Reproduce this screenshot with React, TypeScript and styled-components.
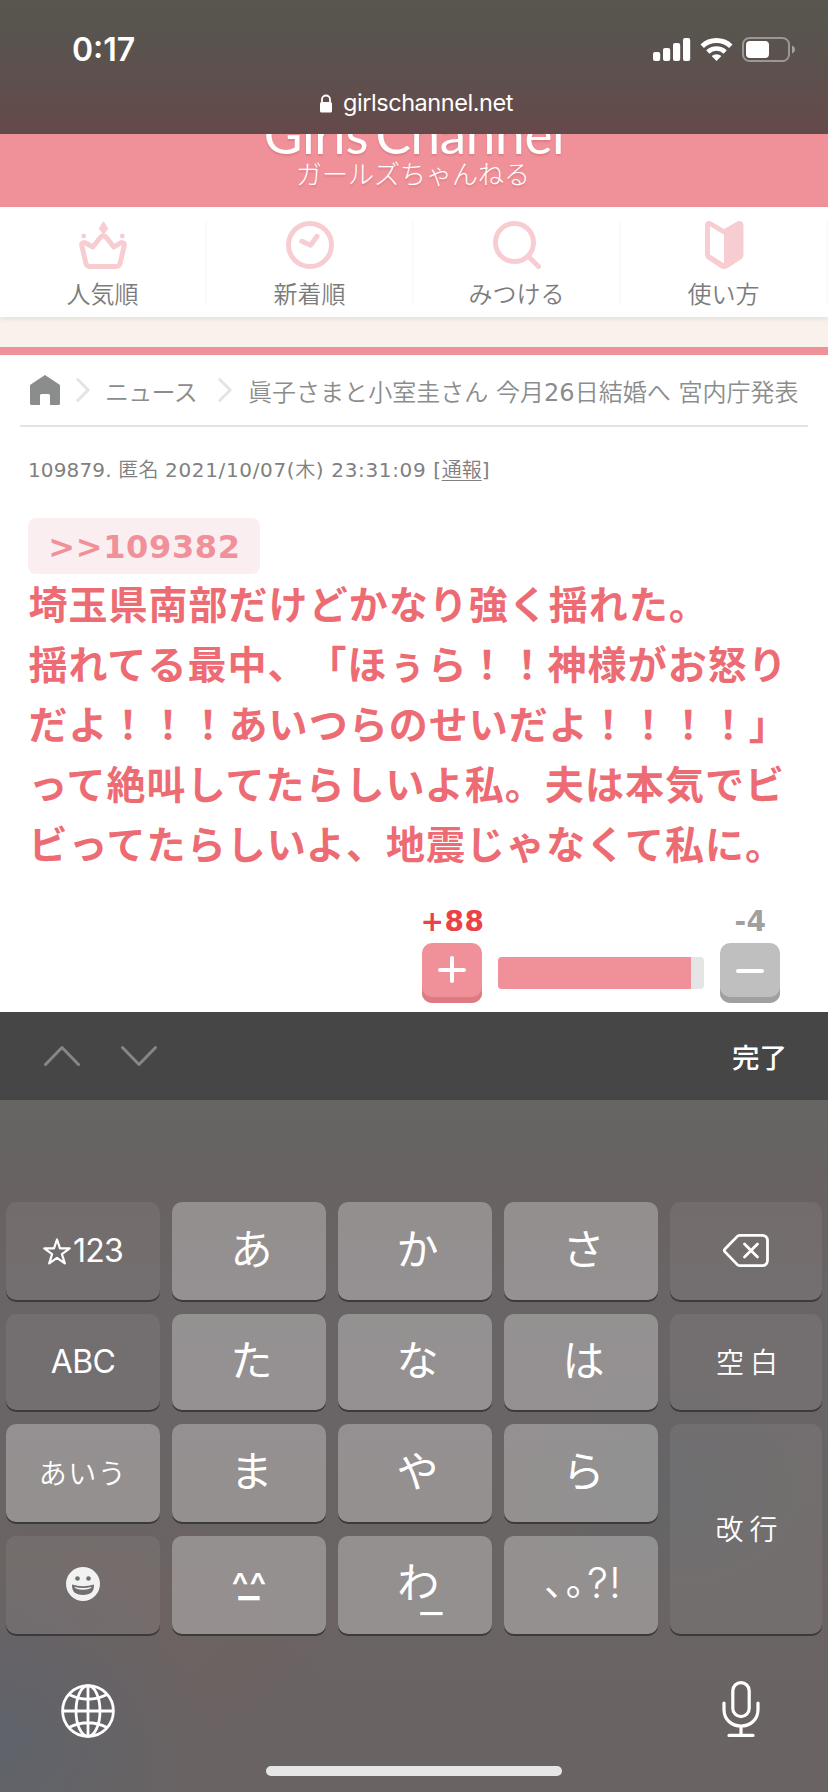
import React from "react";
import styled, { createGlobalStyle } from "styled-components";

const jp = `"Noto Sans CJK JP", sans-serif`;
const ui = `Inter, "Noto Sans CJK JP", sans-serif`;
const web = `"DejaVu Sans", "Noto Sans CJK JP", sans-serif`;

const GlobalStyle = createGlobalStyle`
  * { box-sizing: border-box; }
  body { margin: 0; background: #fff; }
  svg { display: block; flex: none; }
`;

const Screen = styled.div`
  width: 828px;
  height: 1792px;
  display: flex;
  flex-direction: column;
  overflow: hidden;
  background: #fff;
  font-family: ${web};
`;

/* ---------- Browser chrome ---------- */

const BrowserBar = styled.header`
  height: 134px;
  flex: none;
  color: #fff;
  font-family: ${ui};
  background: linear-gradient(180deg, #58564f 0%, #59534e 33%, #5e4f4d 62%, #654a4a 95%, #62494a 100%);
`;

const StatusRow = styled.div`
  height: 84px;
  display: flex;
  justify-content: space-between;
  align-items: flex-start;
  padding: 32px 32px 0 72px;
`;

const Clock = styled.span`
  font-size: 32px;
  line-height: 36px;
  font-weight: 600;
`;

const StatusIcons = styled.div`
  display: flex;
  gap: 9px;
  padding-top: 5px;
`;

const AddressRow = styled.div`
  display: flex;
  align-items: center;
  gap: 11px;
  height: 38px;
  padding-left: 320px;
  font-size: 23.5px;
  line-height: 30px;
  letter-spacing: -0.45px;
`;

/* ---------- Site ---------- */

const SiteHeader = styled.div`
  height: 73px;
  flex: none;
  overflow: hidden;
  background: #f09199;
  color: #fff;
  display: flex;
  flex-direction: column;
  align-items: center;
  text-shadow: 0 2px 2px rgba(160, 60, 70, 0.22);
`;

const Logo = styled.div`
  font-family: Lato, sans-serif;
  font-size: 53px;
  line-height: 60px;
  height: 60px;
  margin-top: -30px;
  font-weight: 400;
  letter-spacing: -0.3px;
  word-spacing: -6px;
  white-space: nowrap;
  flex: none;
`;

const LogoKana = styled.div`
  font-family: ${jp};
  font-weight: 300;
  font-size: 26px;
  line-height: 30px;
  margin: -6px 2px 0 0;
  white-space: nowrap;
`;

const SiteNav = styled.nav`
  position: relative;
  height: 110px;
  flex: none;
  display: grid;
  grid-template-columns: repeat(4, 207px);
  padding-top: 14px;
  background: #fff;
  box-shadow: 0 2px 5px rgba(80, 90, 80, 0.13);
`;

const NavItem = styled.a`
  height: 84px;
  border-right: 2px solid #fafafa;
  display: flex;
  flex-direction: column;
  align-items: center;
  gap: 8px;
  font-family: ${jp};
  font-weight: 350;
  font-size: 24px;
  line-height: 32px;
  color: #7c7c7c;
`;

const Band = styled.div`
  height: 38px;
  flex: none;
  background: #f9f2ec;
  border-bottom: 8px solid #f09199;
`;

const Breadcrumb = styled.div`
  height: 72px;
  flex: none;
  margin: 0 20px;
  padding: 0 0 0 10px;
  border-bottom: 2px solid #e2e4e3;
  display: flex;
  align-items: center;
  font-weight: 350;
  font-size: 24px;
  line-height: 66px;
  color: #8b8d8c;
  white-space: nowrap;
`;

const Crumb = styled.span<{ $left: number; $spacing?: number }>`
  margin-left: ${(p) => p.$left}px;
  padding-top: 5px;
  letter-spacing: ${(p) => p.$spacing ?? 0}px;
`;

const CrumbArrow = styled.svg<{ $left: number }>`
  margin-left: ${(p) => p.$left}px;
`;

const Latin = styled.span`
  font-weight: 400;
`;

const Comment = styled.article`
  height: 585px;
  flex: none;
  padding: 28px 28px 0;
`;

const Meta = styled.div`
  font-weight: 350;
  font-size: 20px;
  line-height: 30px;
  letter-spacing: 0.15px;
  color: #808080;
  white-space: nowrap;
`;

const PostedAt = styled.span`
  letter-spacing: 0.64px;
`;

const Report = styled.span`
  letter-spacing: 0;
  text-decoration: underline;
  text-decoration-thickness: 1px;
  text-underline-offset: 3px;
`;

const ReplyTo = styled.div`
  width: 232px;
  height: 56px;
  margin-top: 33px;
  border-radius: 8px;
  background: #fbeef1;
  color: #f09199;
  font-weight: 700;
  font-size: 32px;
  line-height: 58px;
  letter-spacing: 0.65px;
  padding-left: 1px;
  text-align: center;
`;

const Body = styled.div`
  margin-top: -2px;
  padding-left: 0.5px;
  font-family: ${jp};
  font-weight: 700;
  font-size: 39px;
  line-height: 60px;
  letter-spacing: 1.02px;
  color: #ed6c74;
  white-space: nowrap;
  text-spacing-trim: space-all;
`;

const Votes = styled.div`
  display: flex;
  margin: 32px 20px 0 394px;
  align-items: flex-end;
  justify-content: space-between;
`;

const Vote = styled.div`
  width: 60px;
  display: flex;
  flex-direction: column;
  align-items: center;
`;

const Count = styled.span<{ $color: string }>`
  font-weight: 700;
  font-size: 28px;
  line-height: 36px;
  height: 39px;
  letter-spacing: 0.5px;
  padding-left: 1px;
  color: ${(p) => p.$color};
`;

const VoteButton = styled.button<{ $face: string; $edge: string }>`
  width: 60px;
  height: 60px;
  padding: 0 0 6px;
  border: 0;
  border-radius: 10px;
  background: ${(p) => p.$face};
  box-shadow: inset 0 -6px 0 ${(p) => p.$edge};
  display: flex;
  align-items: center;
  justify-content: center;
`;

const Meter = styled.div`
  width: 206px;
  height: 32px;
  margin-bottom: 14px;
  border-radius: 4px;
  overflow: hidden;
  background: #e5e5e5;
`;

const MeterFill = styled.div`
  height: 100%;
  background: #f09199;
`;

/* ---------- Keyboard ---------- */

const Accessory = styled.div`
  height: 88px;
  flex: none;
  display: flex;
  align-items: center;
  padding: 0 41px 0 44px;
  gap: 41px;
  background: #464646;
`;

const Done = styled.span`
  margin-left: auto;
  color: #fff;
  font-family: ${jp};
  font-weight: 500;
  font-size: 27.5px;
  line-height: 40px;
`;

const Keyboard = styled.div`
  flex: 1;
  display: flex;
  flex-direction: column;
  padding-top: 102px;
  color: #fff;
  background:
    radial-gradient(ellipse 200px 190px at 0px 640px, #5f636a 0%, rgba(97, 99, 105, 0.7) 45%, rgba(106, 100, 100, 0) 100%),
    radial-gradient(ellipse 260px 150px at 90px 520px, rgba(110, 98, 97, 0.8), rgba(106, 100, 100, 0) 100%),
    radial-gradient(ellipse 150px 120px at 680px 390px, rgba(99, 101, 103, 0.8), rgba(106, 100, 100, 0) 100%),
    linear-gradient(180deg, #666562 0px, #666463 40px, #696262 100px, #696566 200px, #6a6464 480px, #6a6363 692px);
`;

const KeyGrid = styled.div`
  display: grid;
  grid-template-columns: repeat(4, 154px) 152px;
  grid-template-rows: 98px 96px 98px 98px;
  gap: 14px 12px;
  padding-left: 6px;
`;

const Key = styled.div<{ $tone: "light" | "dark"; $tall?: boolean }>`
  ${(p) => (p.$tall ? "grid-row: span 2;" : "")}
  display: flex;
  align-items: center;
  justify-content: center;
  border-radius: 10px;
  background: rgba(255, 255, 255, ${(p) => (p.$tone === "light" ? 0.285 : 0.065)});
  box-shadow: 0 2px 0 #3d3a3a;
`;

const Kana = styled.span`
  font-family: ${jp};
  font-weight: 400;
  font-size: 42px;
  line-height: 60px;
  padding: 0 0 9px 5px;
`;

const KeyLabel = styled.span<{ $spacing: number; $indent: number }>`
  font-family: ${jp};
  font-weight: 350;
  font-size: 28px;
  line-height: 40px;
  letter-spacing: ${(p) => p.$spacing}px;
  padding: 0 0 3px ${(p) => p.$indent}px;
`;

const LatinLabel = styled.span`
  display: flex;
  align-items: center;
  gap: 2px;
  font-family: ${ui};
  font-size: 32px;
  line-height: 40px;
  letter-spacing: -0.7px;
`;

const Kaomoji = styled.span`
  display: flex;
  flex-direction: column;
  align-items: center;
  font-family: ${ui};
  padding-bottom: 4px;
`;

const KaomojiEyes = styled.span`
  font-weight: 500;
  font-size: 37px;
  line-height: 30px;
  height: 24px;
`;

const KaomojiMouth = styled.span`
  font-weight: 500;
  font-size: 46px;
  line-height: 10px;
  height: 22px;
  margin-top: -21px;
`;

const WaLabel = styled.span`
  display: flex;
  font-family: ${jp};
  font-size: 42px;
  line-height: 60px;
  padding-bottom: 10px;
`;

const WaBar = styled.span`
  font-family: ${ui};
  font-weight: 300;
  font-size: 50px;
  margin: 14px -10px -14px -19px;
`;

const Punctuation = styled.span`
  display: flex;
  align-items: center;
  font-family: ${jp};
  font-size: 38px;
  line-height: 60px;
  letter-spacing: 2px;
  padding: 0 0 13px 5px;
`;

const Marks = styled.span`
  font-family: ${ui};
  font-weight: 300;
  font-size: 42px;
  line-height: 50px;
  letter-spacing: 1px;
  padding-top: 8px;
`;

const SystemRow = styled.div`
  display: flex;
  justify-content: space-between;
  align-items: flex-start;
  height: 132px;
  padding: 46px 68px 0 60px;
`;

const HomeIndicator = styled.div`
  width: 296px;
  height: 10px;
  margin: 0 auto;
  border-radius: 5px;
  background: #e6e6e6;
`;

/* ---------- Icons ---------- */

const Signal = () => (
  <svg width="38" height="24" viewBox="0 0 38 24" fill="#fff">
    <rect x="0" y="15" width="7.2" height="9" rx="2" />
    <rect x="10" y="11" width="7.2" height="13" rx="2" />
    <rect x="20" y="6" width="7.2" height="18" rx="2" />
    <rect x="30" y="1" width="7.2" height="23" rx="2" />
  </svg>
);

const Wifi = () => (
  <svg width="33" height="24" viewBox="0 0 33 24" fill="none" stroke="#fff">
    <path d="M2.2 9.2A20.8 20.8 0 0 1 30.8 9.2" strokeWidth="5" />
    <path d="M7.8 15A12.6 12.6 0 0 1 25.2 15" strokeWidth="4.6" />
    <path d="M11.6 19.1a7.2 7.2 0 0 1 9.8 0L16.5 24z" fill="#fff" stroke="none" />
  </svg>
);

const Battery = () => (
  <svg width="54" height="26" viewBox="0 0 54 26">
    <rect x="1" y="1" width="46" height="23" rx="6.5" fill="none" stroke="#fff" strokeOpacity="0.4" strokeWidth="2" />
    <rect x="4" y="4" width="23" height="17" rx="4" fill="#fff" />
    <path d="M50 8.5q3 1.200 3 4t-3 4z" fill="#fff" fillOpacity="0.45" />
  </svg>
);

const Lock = () => (
  <svg width="12" height="19" viewBox="0 0 12 19">
    <path d="M2 9V5.500a4 4 0 0 1 8 0V9" fill="none" stroke="#fff" strokeWidth="1.800" />
    <rect x="0" y="8" width="12" height="10.500" rx="1.500" fill="#fff" />
  </svg>
);

const pink = "#f8cdd2";

const Crown = () => (
  <svg width="48" height="48" viewBox="0 0 48 48">
    <path d="M24.500 0l4.700 7.500-4.700 6.500-4.700-6.500z" fill={pink} />
    <circle cx="4.700" cy="15" r="2.400" fill={pink} />
    <circle cx="43.300" cy="15" r="2.400" fill={pink} />
    <path
      d="M10.500 45.500h27c2 0 3-1 3.500-2.800l4.200-18c.8-3.200-2.800-3.900-4.400-2.400L34.700 26l-7.400-9.700c-1.600-2.200-4.200-2.200-5.800 0L13.800 26l-6.600-3.700c-1.600-1.500-5.200-.8-4.400 2.400l4.200 18c.5 1.800 1.500 2.800 3.500 2.800z"
      fill="none"
      stroke={pink}
      strokeWidth="5"
      strokeLinejoin="round"
    />
  </svg>
);

const ClockIcon = () => (
  <svg width="48" height="48" viewBox="0 0 48 48" fill="none" stroke={pink} strokeWidth="5">
    <circle cx="24" cy="24" r="21.500" />
    <path d="M15.800 20.300l8.800 4 6.400-9" strokeLinecap="round" strokeLinejoin="round" />
  </svg>
);

const SearchIcon = () => (
  <svg width="48" height="48" viewBox="0 0 48 48" fill="none" stroke={pink} strokeWidth="5">
    <circle cx="21.500" cy="21.500" r="19" />
    <path d="M36 36l9.500 9.500" strokeLinecap="round" />
  </svg>
);

const BookIcon = () => (
  <svg width="40" height="48" viewBox="0 0 40 48">
    <path d="M20 8L8 .9C5-.9 1 .5 1 4.200V34q0 2.500 2 4l13.500 9q1.700 1 3.500 1v-5.500L6 33.500V5.300L20 13.800z" fill={pink} />
    <path d="M20 8L32.500.9C35.500-.9 39.500.5 39.500 4.200V34q0 2.500-2 4L23.700 47q-1.700 1-3.700 1z" fill={pink} />
  </svg>
);

const HomeIcon = () => (
  <svg width="30" height="30" viewBox="0 0 30 30">
    <path d="M15 0l14.300 9.600q.7.500.7 1.300V28.500q0 1.500-1.500 1.500H20V20.500q0-1.500-1.500-1.500h-7Q10 19 10 20.500V30H1.500Q0 30 0 28.500V10.900q0-.8.7-1.300z" fill="#8b8d8c" />
  </svg>
);

const Arrow = ({ left }: { left: number }) => (
  <CrumbArrow $left={left} width="14" height="26" viewBox="0 0 14 26">
    <path d="M1.700 2.500l10.500 10.500L1.700 23.500" fill="none" stroke="#e4e4e4" strokeWidth="3" strokeLinecap="round" strokeLinejoin="round" />
  </CrumbArrow>
);

const Chevron = ({ down }: { down?: boolean }) => (
  <svg width="36" height="22" viewBox="0 0 36 22">
    <path d={down ? "M1.500 2.500L18 19.500 34.500 2.500" : "M1.500 19.500L18 2.500 34.500 19.500"} fill="none" stroke="#868686" strokeWidth="3" strokeLinecap="round" strokeLinejoin="round" />
  </svg>
);

const Sign = ({ plus }: { plus?: boolean }) => (
  <svg width="28" height="28" viewBox="0 0 28 28" stroke="#fff" strokeWidth="4" strokeLinecap="round">
    <path d={plus ? "M2 14h24M14 2v23" : "M2 15h24"} />
  </svg>
);

const Star = () => (
  <svg width="28" height="27" viewBox="0 0 28 27">
    <path d="M14 1.500l3 8.900h9.700l-7.800 5.700 2.900 9.300L14 19.800l-7.800 5.600 2.900-9.300-7.800-5.700H11z" fill="none" stroke="#fff" strokeWidth="2.200" strokeLinejoin="round" />
  </svg>
);

const Backspace = () => (
  <svg width="48" height="36" viewBox="-1 0 48 36" fill="none" stroke="#fff" strokeLinecap="round" strokeLinejoin="round">
    <path d="M16.500 2.400h23a5 5 0 0 1 5 5v20.200a5 5 0 0 1-5 5h-23a3 3 0 0 1-2.200-1L2 18.900a2 2 0 0 1 0-2.800L14.300 3.400a3 3 0 0 1 2.200-1z" strokeWidth="2.800" />
    <path d="M21.500 11l13 13M34.500 11l-13 13" strokeWidth="2.800" />
  </svg>
);

const Smile = () => (
  <svg width="34" height="36" viewBox="0 0 34 36">
    <circle cx="17" cy="17" r="17" fill="#f2f2f2" />
    <circle cx="11.500" cy="11.500" r="2.300" fill="#756e6e" />
    <circle cx="22.500" cy="11.500" r="2.300" fill="#756e6e" />
    <path d="M6 17.500q11 3.500 22 0 .5 10.500-11 10.500T6 17.500z" fill="#756e6e" />
    <path d="M8 19.700q9 2.400 18 0-2 3-9 3t-9-3z" fill="#f2f2f2" />
  </svg>
);

const Globe = () => (
  <svg width="56" height="58" viewBox="0 0 56 58" fill="none" stroke="#fff" strokeWidth="2.800">
    <circle cx="28" cy="31" r="25.400" />
    <ellipse cx="28" cy="31" rx="12" ry="25.400" />
    <path d="M28 5.600v50.800M2.600 31h50.800M9 14.500q19 9.500 38 0M9 47.500q19-9.500 38 0" />
  </svg>
);

const Mic = () => (
  <svg width="38" height="58" viewBox="0 0 38 58" fill="none" stroke="#fff" strokeWidth="3.200" strokeLinecap="round">
    <rect x="10.800" y="2.600" width="16.400" height="34" rx="8.200" />
    <path d="M2 23v6.500C2 39.500 9.500 46 19 46s17-6.500 17-16.500V23M19 46v9M7 55.400h24" />
  </svg>
);

/* ---------- Data ---------- */

const navItems = [
  { label: "人気順", icon: <Crown /> },
  { label: "新着順", icon: <ClockIcon /> },
  { label: "みつける", icon: <SearchIcon /> },
  { label: "使い方", icon: <BookIcon /> },
];

const lines = [
  "埼玉県南部だけどかなり強く揺れた。",
  "揺れてる最中、「ほぅら！！神様がお怒り",
  "だよ！！！あいつらのせいだよ！！！！」",
  "って絶叫してたらしいよ私。夫は本気でビ",
  "ビってたらしいよ、地震じゃなくて私に。",
];

const KanaKey = ({ children }: { children: string }) => (
  <Key $tone="light">
    <Kana>{children}</Kana>
  </Key>
);

export default function App() {
  const plus = 88;
  const minus = 4;
  const share = (plus / (plus + minus)) * 100 - 2;

  return (
    <Screen lang="ja">
      <GlobalStyle />
      <BrowserBar>
        <StatusRow>
          <Clock>0:17</Clock>
          <StatusIcons>
            <Signal />
            <Wifi />
            <Battery />
          </StatusIcons>
        </StatusRow>
        <AddressRow>
          <Lock />
          <span>girlschannel.net</span>
        </AddressRow>
      </BrowserBar>

      <SiteHeader>
        <Logo>Girls Channel</Logo>
        <LogoKana>ガールズちゃんねる</LogoKana>
      </SiteHeader>
      <SiteNav>
        {navItems.map((item) => (
          <NavItem key={item.label}>
            {item.icon}
            {item.label}
          </NavItem>
        ))}
      </SiteNav>
      <Band />
      <Breadcrumb>
        <HomeIcon />
        <Arrow left={16} />
        <Crumb $left={15} $spacing={-0.7}>
          ニュース
        </Crumb>
        <Arrow left={21} />
        <Crumb $left={16} $spacing={0.03}>
          眞子さまと小室圭さん 今月<Latin>26</Latin>日結婚へ 宮内庁発表
        </Crumb>
      </Breadcrumb>
      <Comment>
        <Meta>
          <Latin>109879.</Latin> 匿名{" "}
          <PostedAt>
            <Latin>2021/10/07(</Latin>木<Latin>) 23:31:09 [</Latin>
            <Report>通報</Report>
            <Latin>]</Latin>
          </PostedAt>
        </Meta>
        <ReplyTo>&gt;&gt;109382</ReplyTo>
        <Body>
          {lines.map((line) => (
            <div key={line}>{line}</div>
          ))}
        </Body>
        <Votes>
          <Vote>
            <Count $color="#ed4148">+{plus}</Count>
            <VoteButton $face="#f09199" $edge="#dc7b84">
              <Sign plus />
            </VoteButton>
          </Vote>
          <Meter>
            <MeterFill style={{ width: `${share}%` }} />
          </Meter>
          <Vote>
            <Count $color="#a0a0a0">-{minus}</Count>
            <VoteButton $face="#bfbfbf" $edge="#a0a0a0">
              <Sign />
            </VoteButton>
          </Vote>
        </Votes>
      </Comment>

      <Accessory>
        <Chevron />
        <Chevron down />
        <Done>完了</Done>
      </Accessory>
      <Keyboard>
        <KeyGrid>
          <Key $tone="dark">
            <LatinLabel>
              <Star />
              123
            </LatinLabel>
          </Key>
          <KanaKey>あ</KanaKey>
          <KanaKey>か</KanaKey>
          <KanaKey>さ</KanaKey>
          <Key $tone="dark">
            <Backspace />
          </Key>
          <Key $tone="dark">
            <LatinLabel>ABC</LatinLabel>
          </Key>
          <KanaKey>た</KanaKey>
          <KanaKey>な</KanaKey>
          <KanaKey>は</KanaKey>
          <Key $tone="dark">
            <KeyLabel $spacing={6} $indent={8}>
              空白
            </KeyLabel>
          </Key>
          <Key $tone="light">
            <KeyLabel $spacing={1.5} $indent={0}>
              あいう
            </KeyLabel>
          </Key>
          <KanaKey>ま</KanaKey>
          <KanaKey>や</KanaKey>
          <KanaKey>ら</KanaKey>
          <Key $tone="dark" $tall>
            <KeyLabel $spacing={6} $indent={7}>
              改行
            </KeyLabel>
          </Key>
          <Key $tone="dark">
            <Smile />
          </Key>
          <Key $tone="light">
            <Kaomoji>
              <KaomojiEyes>^^</KaomojiEyes>
              <KaomojiMouth>_</KaomojiMouth>
            </Kaomoji>
          </Key>
          <Key $tone="light">
            <WaLabel>
              わ<WaBar>_</WaBar>
            </WaLabel>
          </Key>
          <Key $tone="light">
            <Punctuation>
              ､｡<Marks>?!</Marks>
            </Punctuation>
          </Key>
        </KeyGrid>
        <SystemRow>
          <Globe />
          <Mic />
        </SystemRow>
        <HomeIndicator />
      </Keyboard>
    </Screen>
  );
}
